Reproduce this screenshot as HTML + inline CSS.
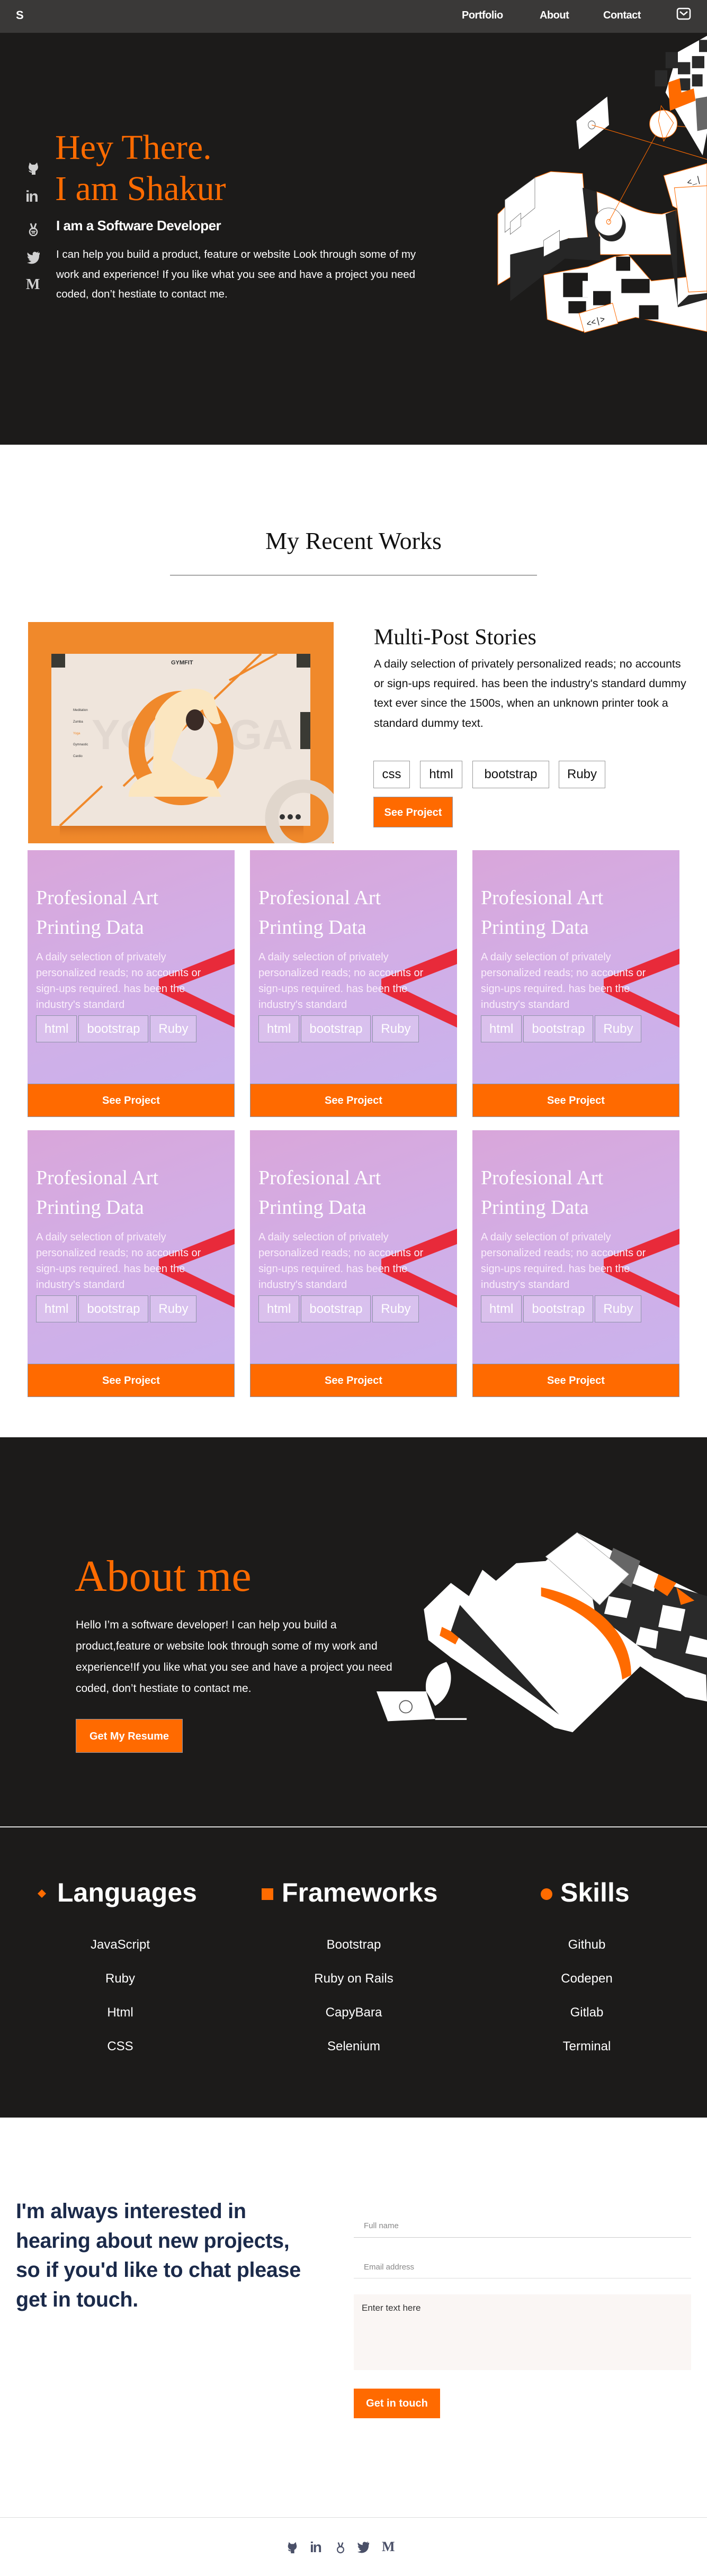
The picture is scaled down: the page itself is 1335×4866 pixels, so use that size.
<!DOCTYPE html>
<html><head><meta charset="utf-8">
<style>
*{margin:0;padding:0;box-sizing:border-box}
html,body{width:1335px;height:4866px;background:#fff;overflow:hidden}
body{position:relative;font-family:"Liberation Sans",sans-serif}
.a{position:absolute}
.serif{font-family:"Liberation Serif",serif}
.or{color:#ff6b00}
.nav{left:0;top:0;width:1335px;height:62px;background:#3a3938}
.nav span{position:absolute;top:18px;color:#fff;font-weight:bold;font-size:20px;letter-spacing:-0.5px}
.hero{left:0;top:62px;width:1335px;height:778px;background:#1c1b1a}
.soc{left:50px;width:26px;height:26px}
.card{width:391px;height:504px;background:linear-gradient(160deg,#d9a6da 0%,#d2aee6 45%,#c8b3ee 100%);overflow:hidden}
.card h3{position:absolute;left:16px;top:62px;font-family:"Liberation Serif",serif;font-weight:normal;color:#fff;font-size:38px;line-height:56px;width:300px}
.card p{position:absolute;left:16px;top:187px;color:#fbeefb;font-size:20px;line-height:30px;width:320px}
.card .tags{position:absolute;left:16px;top:312px;display:flex;gap:3px}
.card .tags span{display:block;height:51px;line-height:49px;border:1px solid #8e93a8;background:rgba(255,255,255,.22);color:#fff;font-size:24px;padding:0 15px}
.card .btn{position:absolute;left:0;bottom:0;width:100%;height:63px;background:#ff6a00;color:#fff;font-weight:bold;font-size:20px;text-align:center;line-height:63px;border:1px solid #8a93a8}
.card svg{position:absolute;left:0;top:0}
.tag{height:52px;border:1px solid #999;font-size:24px;line-height:50px;text-align:center;color:#111}
.sk{color:#fff;font-size:24px;text-align:center;width:300px}
.skh{color:#fff;font-weight:bold;font-size:50px;top:3546px}
</style></head><body>

<div class="a nav">
  <span style="left:30px;top:16px;font-size:22px">S</span>
  <span style="left:872px">Portfolio</span>
  <span style="left:1019px">About</span>
  <span style="left:1139px">Contact</span>
  <svg class="a" style="left:1277px;top:14px" width="28" height="24" viewBox="0 0 28 24"><rect x="2" y="2" width="24" height="20" rx="4" fill="none" stroke="#fff" stroke-width="2.5"/><path d="M7 8 L14 14 L21 8" fill="none" stroke="#fff" stroke-width="2.5"/></svg>
</div>

<div class="a hero"></div>
<svg class="a soc" style="top:305px" viewBox="0 0 26 26"><path d="M6 2 L10 6 H16 L20 2 L22 10 C22 15 19 17 17 18 V25 H10 V21 C7 21 5 20 4 17 L7 18 C8 19 9 19 10 19 V18 C7 17 4 15 4 10 Z" fill="#d0d0d0"/></svg>
<div class="a" style="left:48px;top:355px;color:#d0d0d0;font-weight:bold;font-size:30px;letter-spacing:-2px">in</div>
<svg class="a soc" style="top:420px" viewBox="0 0 26 26"><path d="M8 2 L12 13 M18 2 L14 13" stroke="#d0d0d0" stroke-width="3" fill="none"/><circle cx="13" cy="18" r="7" fill="none" stroke="#d0d0d0" stroke-width="2.5"/><path d="M9 17 L17 17 M10 20 L16 20" stroke="#d0d0d0" stroke-width="2"/></svg>
<svg class="a soc" style="top:474px" viewBox="0 0 26 26"><path d="M25 3 C23 4 22 4 21 4 C22 3 23 2 23 1 C21 2 20 3 19 3 C17 1 13 1 12 4 C11 6 12 8 12 8 C7 8 4 5 2 3 C1 6 2 9 5 11 C4 11 3 10 2 10 C2 13 4 15 7 16 C6 16 5 16 4 16 C5 18 7 19 9 19 C7 21 4 22 1 22 C12 28 24 22 24 9 V8 C25 7 25 5 25 3 Z" fill="#d0d0d0"/></svg>
<div class="a serif" style="left:49px;top:522px;color:#d0d0d0;font-weight:bold;font-size:28px">M</div>

<div class="a serif or" style="left:104px;top:240px;font-size:66px;line-height:78px">Hey There.<br>I am Shakur</div>
<div class="a" style="left:106px;top:411px;color:#fff;font-weight:bold;font-size:26px;letter-spacing:-0.5px">I am a Software Developer</div>
<div class="a" style="left:106px;top:462px;color:#fff;font-size:20.5px;line-height:37.5px;width:700px">I can help you build a product, feature or website Look through some of my work and experience! If you like what you see and have a project you need coded, don’t hestiate to contact me.</div>

<svg class="a" style="left:900px;top:60px" width="435" height="600" viewBox="0 0 1305 1568" preserveAspectRatio="none">
  <g stroke="#ff6b00" stroke-width="3" fill="#fff">
    <path d="M120 900 L330 720 L420 690 L600 700 L630 1030 L520 1020 L380 1110 L120 1250 Z"/>
    <path d="M380 1200 L630 1160 L780 1110 L860 1100 L990 1230 L1305 1200 L1305 1480 L900 1410 L600 1480 L400 1420 Z"/>
    <path d="M1060 710 L1305 650 L1305 880 L1130 870 L1110 860 Z"/>
    <path d="M1120 770 L1305 760 L1305 1280 L1200 1285 Z"/>
    <path d="M680 790 C800 820 900 900 1050 900 L1130 880 L1130 1100 L700 1100 Z"/>
  </g>
  <path d="M190 1330 L190 1100 L380 1060 L520 1020 L700 1010 L700 1130 L500 1120 Z" fill="#262626"/>
  <path d="M1070 900 L1130 880 L1140 1350 L1200 1300 L1305 1290 L1305 1320 L1140 1360 Z" fill="#262626"/>
  <path d="M600 770 L680 790 L700 1130 L640 1100 Z" fill="#262626"/>
  <g fill="#1c1b1a">
    <rect x="490" y="1190" width="140" height="120"/><rect x="600" y="1230" width="80" height="80" fill="#fff"/>
    <rect x="790" y="1110" width="80" height="70"/><rect x="820" y="1220" width="160" height="70"/>
    <rect x="660" y="1280" width="100" height="70"/><rect x="920" y="1350" width="110" height="70"/>
    <rect x="520" y="1330" width="100" height="60"/>
  </g>
  <path d="M580 1390 L770 1340 L800 1440 L610 1485 Z" fill="#fff" stroke="#ff6b00" stroke-width="3"/>
  <text x="620" y="1440" font-family="Liberation Mono" font-size="44" transform="rotate(-15 690 1420)" fill="#111">&lt;&lt;|&gt;</text>
  <text x="1190" y="750" font-family="Liberation Mono" font-size="44" transform="rotate(-15 1230 730)" fill="#111">&lt;_|</text>
  <path d="M330 720 L330 870 L160 990 L160 830 Z" fill="#fff" stroke="#555" stroke-width="2"/>
  <path d="M190 940 L250 895 L250 960 L190 1000 Z" fill="#fff" stroke="#555" stroke-width="2"/>
  <path d="M380 1030 L470 980 L470 1070 L380 1110 Z" fill="#fff" stroke="#555" stroke-width="2"/>
  <ellipse cx="765" cy="960" rx="80" ry="75" fill="#262626"/>
  <ellipse cx="748" cy="938" rx="78" ry="68" fill="#fff" stroke="#555" stroke-width="2"/>
  <circle cx="748" cy="938" r="12" fill="none" stroke="#ff6b00" stroke-width="3"/>
  <path d="M565 440 L740 320 L750 460 L580 580 Z" fill="#fff"/>
  <circle cx="652" cy="460" r="20" fill="none" stroke="#666" stroke-width="3"/>
  <path d="M652 460 L1305 630 M748 938 L1040 470 M1130 465 L1305 480" stroke="#ff6b00" stroke-width="3" fill="none"/>
  <ellipse cx="1058" cy="455" rx="78" ry="68" fill="#fff" stroke="#ff6b00" stroke-width="3"/>
  <path d="M1045 365 L1115 450 L1060 540 L1030 440 Z" fill="none" stroke="#ff6b00" stroke-width="3"/>
  <path d="M1140 100 L1305 20 L1305 500 L1280 610 L1070 300 Z" fill="#fff"/>
  <g fill="#2a2a2a">
    <rect x="1140" y="150" width="70" height="60"/><rect x="1220" y="120" width="70" height="60"/><rect x="1220" y="210" width="60" height="60"/>
    <rect x="1150" y="230" width="60" height="60"/><rect x="1260" y="40" width="45" height="60"/><rect x="1070" y="100" width="70" height="80"/><rect x="1010" y="190" width="70" height="80"/>
  </g>
  <path d="M1240 330 L1305 320 L1305 480 L1250 490 Z" fill="#666"/>
  <path d="M1085 250 L1150 230 L1160 300 L1230 280 L1240 340 L1095 390 Z" fill="#ff6b00"/>
</svg>

<div class="a serif" style="left:0;width:1335px;top:995px;text-align:center;font-size:46px;color:#111">My Recent Works</div>
<div class="a" style="left:321px;top:1086px;width:693px;height:1px;background:#555"></div>

<div class="a" style="left:53px;top:1175px;width:577px;height:418px;background:#f0892b"></div>
<svg class="a" style="left:53px;top:1175px" width="577" height="418" viewBox="0 0 577 418">
  <defs><linearGradient id="sh" x1="0" y1="0" x2="0" y2="1"><stop offset="0" stop-color="#c8651a" stop-opacity=".6"/><stop offset="1" stop-color="#f0892b" stop-opacity="0"/></linearGradient></defs>
  <rect x="60" y="385" width="460" height="30" fill="url(#sh)"/>
  <rect x="44" y="60" width="489" height="325" fill="#efe5dc"/>
  <path d="M60 385 L140 310 M180 310 L440 60 M380 110 L470 60" stroke="#f0892b" stroke-width="4"/>
  <text x="120" y="240" font-size="80" font-weight="bold" fill="#e2d8d0" font-family="Liberation Sans">YO</text>
  <text x="380" y="240" font-size="80" font-weight="bold" fill="#e2d8d0" font-family="Liberation Sans">GA</text>
  <circle cx="520" cy="370" r="60" fill="none" stroke="#e0d6cc" stroke-width="25"/>
  <ellipse cx="289" cy="238" rx="84" ry="93" fill="none" stroke="#f0892b" stroke-width="30"/>
  <path d="M240 180 C260 130 320 110 350 140 L365 190 C350 200 335 185 330 165 C300 180 280 220 270 260 L310 290 L350 300 L365 330 L190 330 C190 300 220 290 235 285 Z" fill="#fbe6c0"/>
  <ellipse cx="315" cy="185" rx="17" ry="20" fill="#3a2b26"/>
  <rect x="44" y="60" width="26" height="26" fill="#3a3a34"/><rect x="507" y="60" width="26" height="26" fill="#3a3a34"/>
  <rect x="514" y="170" width="19" height="70" fill="#3a3a34"/>
  <text x="270" y="80" font-size="11" font-weight="bold" fill="#333" font-family="Liberation Sans">GYMFIT</text>
  <g font-size="6" fill="#333" font-family="Liberation Sans"><text x="85" y="168">Meditation</text><text x="85" y="190">Zumba</text><text x="85" y="212" fill="#f0892b">Yoga</text><text x="85" y="233">Gymnastic</text><text x="85" y="255">Cardio</text></g>
  <circle cx="480" cy="368" r="5" fill="#333"/><circle cx="495" cy="368" r="5" fill="#333"/><circle cx="510" cy="368" r="5" fill="#333"/>
</svg>

<div class="a serif" style="left:706px;top:1180px;font-size:42px;color:#111">Multi-Post Stories</div>
<div class="a" style="left:706px;top:1236px;width:590px;font-size:21.5px;line-height:37.2px;color:#111">A daily selection of privately personalized reads; no accounts or sign-ups required. has been the industry's standard dummy text ever since the 1500s, when an unknown printer took a standard dummy text.</div>
<div class="a tag" style="left:705px;top:1437px;width:69px">css</div>
<div class="a tag" style="left:793px;top:1437px;width:80px">html</div>
<div class="a tag" style="left:892px;top:1437px;width:145px">bootstrap</div>
<div class="a tag" style="left:1055px;top:1437px;width:88px">Ruby</div>
<div class="a" style="left:705px;top:1505px;width:150px;height:58px;background:#ff6a00;color:#fff;font-weight:bold;font-size:20px;text-align:center;line-height:58px;border:1px solid #8a93a8">See Project</div>

<div class="a card" style="left:52px;top:1606px"><svg width="391" height="504"><path d="M391 186 L248 243 L248 268 L391 335 L391 312 L280 258 L391 215 Z" fill="#e82a3a"/></svg><h3>Profesional Art Printing Data</h3><p>A daily selection of privately personalized reads; no accounts or sign-ups required. has been the industry's standard</p><div class="tags"><span>html</span><span>bootstrap</span><span>Ruby</span></div><div class="btn">See Project</div></div>
<div class="a card" style="left:472px;top:1606px"><svg width="391" height="504"><path d="M391 186 L248 243 L248 268 L391 335 L391 312 L280 258 L391 215 Z" fill="#e82a3a"/></svg><h3>Profesional Art Printing Data</h3><p>A daily selection of privately personalized reads; no accounts or sign-ups required. has been the industry's standard</p><div class="tags"><span>html</span><span>bootstrap</span><span>Ruby</span></div><div class="btn">See Project</div></div>
<div class="a card" style="left:892px;top:1606px"><svg width="391" height="504"><path d="M391 186 L248 243 L248 268 L391 335 L391 312 L280 258 L391 215 Z" fill="#e82a3a"/></svg><h3>Profesional Art Printing Data</h3><p>A daily selection of privately personalized reads; no accounts or sign-ups required. has been the industry's standard</p><div class="tags"><span>html</span><span>bootstrap</span><span>Ruby</span></div><div class="btn">See Project</div></div>
<div class="a card" style="left:52px;top:2135px"><svg width="391" height="504"><path d="M391 186 L248 243 L248 268 L391 335 L391 312 L280 258 L391 215 Z" fill="#e82a3a"/></svg><h3>Profesional Art Printing Data</h3><p>A daily selection of privately personalized reads; no accounts or sign-ups required. has been the industry's standard</p><div class="tags"><span>html</span><span>bootstrap</span><span>Ruby</span></div><div class="btn">See Project</div></div>
<div class="a card" style="left:472px;top:2135px"><svg width="391" height="504"><path d="M391 186 L248 243 L248 268 L391 335 L391 312 L280 258 L391 215 Z" fill="#e82a3a"/></svg><h3>Profesional Art Printing Data</h3><p>A daily selection of privately personalized reads; no accounts or sign-ups required. has been the industry's standard</p><div class="tags"><span>html</span><span>bootstrap</span><span>Ruby</span></div><div class="btn">See Project</div></div>
<div class="a card" style="left:892px;top:2135px"><svg width="391" height="504"><path d="M391 186 L248 243 L248 268 L391 335 L391 312 L280 258 L391 215 Z" fill="#e82a3a"/></svg><h3>Profesional Art Printing Data</h3><p>A daily selection of privately personalized reads; no accounts or sign-ups required. has been the industry's standard</p><div class="tags"><span>html</span><span>bootstrap</span><span>Ruby</span></div><div class="btn">See Project</div></div>

<div class="a" style="left:0;top:2715px;width:1335px;height:1285px;background:#1c1b1a"></div>
<div class="a" style="left:0;top:3450px;width:1335px;height:2px;background:#ddd"></div>
<div class="a serif or" style="left:141px;top:2928px;font-size:84px;line-height:100px">About me</div>
<div class="a" style="left:143px;top:3050px;width:625px;color:#fff;font-size:21px;line-height:40px">Hello I’m a software developer! I can help you build a product,feature or website look through some of my work and experience!If you like what you see and have a project you need coded, don’t hestiate to contact me.</div>
<div class="a" style="left:143px;top:3247px;width:202px;height:64px;background:#ff6a00;color:#fff;font-weight:bold;font-size:20px;text-align:center;line-height:64px;border:1px solid #8a93a8">Get My Resume</div>

<svg class="a" style="left:0;top:2700px" width="1335" height="1300" viewBox="0 0 1568 1568" preserveAspectRatio="none">
  <path d="M1210 300 L1280 235 L1400 300 L1560 380 L1568 620 L1520 610 L1420 540 L1270 690 L1230 680 L1000 520 L950 480 L940 410 L1000 350 L1040 380 L1070 320 L1100 345 L1145 305 Z" fill="#fff"/>
  <path d="M1300 300 L1568 380 L1568 560 L1450 520 L1320 420 Z" fill="#2a2a2a"/>
  <g fill="#fff"><path d="M1410 310 L1460 330 L1450 370 L1400 350 Z"/><path d="M1470 400 L1520 410 L1510 460 L1460 450 Z"/><path d="M1350 380 L1400 390 L1390 430 L1340 420 Z"/><path d="M1420 450 L1460 460 L1455 500 L1410 490 Z"/><path d="M1530 470 L1568 480 L1568 520 L1520 510 Z"/></g>
  <path d="M1360 270 L1420 300 L1400 360 L1340 330 Z" fill="#666"/>
  <path d="M1200 360 C1300 380 1400 450 1400 560 L1380 570 C1370 470 1290 410 1200 380 Z" fill="#ff6b00"/>
  <path d="M1460 330 L1500 350 L1480 380 L1450 360 Z M1500 360 L1540 390 L1510 400 Z" fill="#ff6b00"/>
  <path d="M980 450 L1020 470 L1010 490 L975 470 Z" fill="#ff6b00"/>
  <path d="M1020 400 L1240 650 L1120 560 L1000 460 Z" fill="#262626"/>
  <path d="M1210 290 L1280 235 L1395 330 L1330 400 Z" fill="#fff" stroke="#999" stroke-width="1"/>
  <path d="M835 597 L945 597 L965 660 L860 665 Z" fill="#fff"/>
  <circle cx="900" cy="632" r="14" fill="none" stroke="#555" stroke-width="2"/>
  <path d="M965 660 L1035 660" stroke="#fff" stroke-width="4"/>
  <path d="M945 597 C940 560 960 540 990 530 C1010 560 1000 610 965 630 Z" fill="#fff"/>
</svg>

<svg class="a" style="left:70px;top:3568px" width="18" height="18"><path d="M9 1 L17 9 L9 17 L1 9 Z" fill="#ff6b00"/></svg>
<div class="a skh" style="left:108px">Languages</div>
<div class="a" style="left:494px;top:3567px;width:22px;height:22px;background:#ff6b00"></div>
<div class="a skh" style="left:532px">Frameworks</div>
<div class="a" style="left:1021px;top:3567px;width:22px;height:22px;border-radius:50%;background:#ff6b00"></div>
<div class="a skh" style="left:1058px">Skills</div>

<div class="a sk" style="left:77px;top:3660px">JavaScript</div>
<div class="a sk" style="left:77px;top:3724px">Ruby</div>
<div class="a sk" style="left:77px;top:3788px">Html</div>
<div class="a sk" style="left:77px;top:3852px">CSS</div>
<div class="a sk" style="left:518px;top:3660px">Bootstrap</div>
<div class="a sk" style="left:518px;top:3724px">Ruby on Rails</div>
<div class="a sk" style="left:518px;top:3788px">CapyBara</div>
<div class="a sk" style="left:518px;top:3852px">Selenium</div>
<div class="a sk" style="left:958px;top:3660px">Github</div>
<div class="a sk" style="left:958px;top:3724px">Codepen</div>
<div class="a sk" style="left:958px;top:3788px">Gitlab</div>
<div class="a sk" style="left:958px;top:3852px">Terminal</div>

<div class="a" style="left:30px;top:4150px;width:560px;color:#1b2a4a;font-weight:bold;font-size:39.5px;line-height:55.5px;letter-spacing:-0.3px">I'm always interested in hearing about new projects, so if you'd like to chat please get in touch.</div>
<div class="a" style="left:687px;top:4196px;color:#888;font-size:15px">Full name</div>
<div class="a" style="left:668px;top:4226px;width:637px;height:1px;background:#ccc"></div>
<div class="a" style="left:687px;top:4274px;color:#888;font-size:15px">Email address</div>
<div class="a" style="left:668px;top:4303px;width:637px;height:1px;background:#ddd"></div>
<div class="a" style="left:668px;top:4334px;width:637px;height:143px;background:#faf6f4"></div>
<div class="a" style="left:683px;top:4350px;color:#333;font-size:17px">Enter text here</div>
<div class="a" style="left:668px;top:4512px;width:163px;height:56px;background:#ff6a00;color:#fff;font-weight:bold;font-size:20px;text-align:center;line-height:56px">Get in touch</div>

<div class="a" style="left:0;top:4755px;width:1335px;height:1px;background:#ddd"></div>
<svg class="a" style="left:540px;top:4799px" width="24" height="26" viewBox="0 0 26 26"><path d="M6 2 L10 6 H16 L20 2 L22 10 C22 15 19 17 17 18 V25 H10 V21 C7 21 5 20 4 17 L7 18 C8 19 9 19 10 19 V18 C7 17 4 15 4 10 Z" fill="#4a5068"/></svg>
<div class="a" style="left:585px;top:4796px;color:#4a5068;font-weight:bold;font-size:28px;letter-spacing:-2px">in</div>
<svg class="a" style="left:632px;top:4800px" width="22" height="24" viewBox="0 0 26 26"><path d="M8 2 L12 13 M18 2 L14 13" stroke="#4a5068" stroke-width="3" fill="none"/><circle cx="13" cy="18" r="7" fill="none" stroke="#4a5068" stroke-width="2.5"/></svg>
<svg class="a" style="left:674px;top:4800px" width="24" height="24" viewBox="0 0 26 26"><path d="M25 3 C23 4 22 4 21 4 C22 3 23 2 23 1 C21 2 20 3 19 3 C17 1 13 1 12 4 C11 6 12 8 12 8 C7 8 4 5 2 3 C1 6 2 9 5 11 C4 11 3 10 2 10 C2 13 4 15 7 16 C6 16 5 16 4 16 C5 18 7 19 9 19 C7 21 4 22 1 22 C12 28 24 22 24 9 V8 C25 7 25 5 25 3 Z" fill="#4a5068"/></svg>
<div class="a serif" style="left:721px;top:4796px;color:#4a5068;font-weight:bold;font-size:26px">M</div>
</body></html>
